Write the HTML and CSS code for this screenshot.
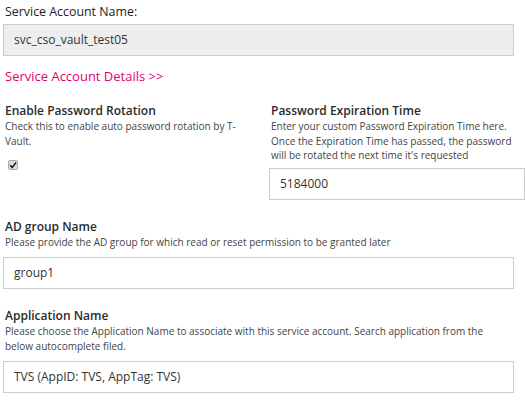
FILE: index.html
```html
<!DOCTYPE html>
<html>
<head>
<meta charset="utf-8">
<link rel="stylesheet" href="styles.css">
</head>
<body>
<div class="page">
  <div class="field-name">
    <div class="label">Service Account Name:</div>
    <div class="input input-disabled">svc_cso_vault_test05</div>
  </div>
  <a class="details-link" href="#">Service Account Details &gt;&gt;</a>

  <div class="row">
    <div class="col">
      <div class="heading">Enable Password Rotation</div>
      <div class="desc">Check this to enable auto password rotation by T-<br>Vault.</div>
      <span class="checkbox"><svg viewBox="0 0 10 10" width="10" height="10"><path d="M2.2 5.2 L4.2 7.4 L8 2.6" fill="none" stroke="#222" stroke-width="1.6"/></svg></span>
    </div>
    <div class="col">
      <div class="heading">Password Expiration Time</div>
      <div class="desc">Enter your custom Password Expiration Time here.<br>Once the Expiration Time has passed, the password<br>will be rotated the next time it's requested</div>
      <div class="input input-exp">5184000</div>
    </div>
  </div>

  <div class="section">
    <div class="heading">AD group Name</div>
    <div class="desc">Please provide the AD group for which read or reset permission to be granted later</div>
    <div class="input">group1</div>
  </div>

  <div class="section">
    <div class="heading">Application Name</div>
    <div class="desc">Please choose the Application Name to associate with this service account. Search application from the<br>below autocomplete filed.</div>
    <div class="input">TVS (AppID: TVS, AppTag: TVS)</div>
  </div>
</div>
</body>
</html>
```

FILE: styles.css
```css
* { box-sizing: border-box; }
body {
  margin: 0;
  font-family: "Open Sans", "DejaVu Sans", sans-serif;
  color: #333;
  background: #fff;
  width: 525px;
  height: 400px;
  overflow: hidden;
}
.page {
  padding: 4px 11px 0 3px;
}
.label {
  font-size: 12.4px;
  line-height: 16px;
  font-weight: 500;
  padding-left: 2px;
  color: #222;
}
.input {
  height: 32px;
  border: 1px solid #ccc;
  background: #fff;
  font-size: 12px;
  line-height: 30px;
  padding-left: 10px;
  color: #333;
  margin-top: 4px;
  white-space: nowrap;
}
.input-disabled {
  background: #eee;
  margin-top: 4px;
}
.details-link {
  display: block;
  color: #e20074;
  text-decoration: none;
  font-size: 13px;
  line-height: 16px;
  padding-left: 2px;
  margin-top: 12px;
}
.row {
  display: grid;
  grid-template-columns: 263px 256px;
  column-gap: 3px;
  margin-right: -11px;
  margin-top: 19px;
}
.heading {
  font-size: 12px;
  line-height: 16px;
  font-weight: 600;
  padding-left: 2px;
  color: #2b2b2b;
}
.desc {
  font-size: 10px;
  line-height: 14.5px;
  padding-left: 2px;
  color: #444;
  white-space: nowrap;
}
.checkbox {
  display: block;
  width: 10px;
  height: 10px;
  margin: 12px 0 0 5px;
  background: #ddd;
  border: 1px solid #aaa;
  border-radius: 2px;
  line-height: 0;
}
.checkbox svg { margin: -1px 0 0 -1px; }
.input-exp {
  margin-top: 5px;
}
.section {
  margin-top: 19px;
}
.section .input {
  margin-top: 8px;
}
```
